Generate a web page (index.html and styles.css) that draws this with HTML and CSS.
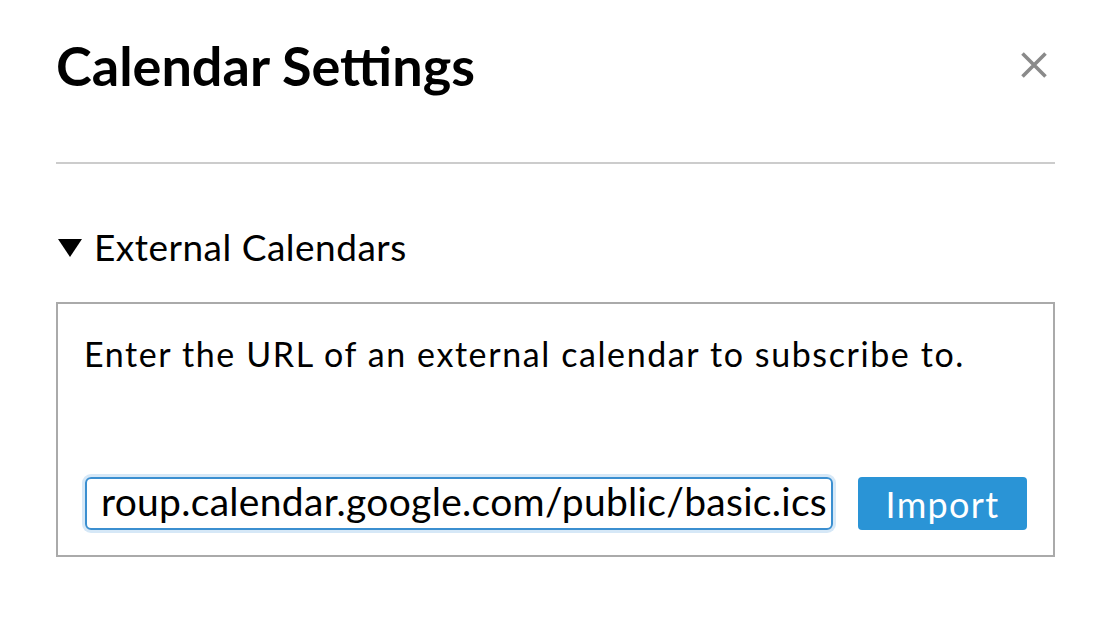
FILE: index.html
```html
<!DOCTYPE html>
<html lang="en">
<head>
    <meta charset="UTF-8">
    <meta name="viewport" content="width=device-width, initial-scale=1.0">
    <title>Calendar Settings</title>
    <link rel="stylesheet" href="styles.css">
</head>
<body>
    <div class="modal">
        <!-- Header -->
        <div class="modal-header">
            <h1>Calendar Settings</h1>
            <button class="close-btn" aria-label="Close">
                <svg width="28" height="28" viewBox="0 0 28 28">
                    <path d="M2.5 2.5 L25.5 25.5 M25.5 2.5 L2.5 25.5" stroke="#8a8a8a" stroke-width="3.6"/>
                </svg>
            </button>
        </div>

        <!-- External calendars section -->
        <div class="section">
            <div class="section-title">
                <span class="caret"></span>
                External Calendars
            </div>
            <div class="section-body">
                <p>Enter the URL of an external calendar to subscribe to.</p>
                <div class="import-row">
                    <div class="url-input">roup.calendar.google.com/public/basic.ics</div>
                    <button class="import-btn">Import</button>
                </div>
            </div>
        </div>
    </div>
</body>
</html>
```

FILE: styles.css
```css
body {
    margin: 0;
    background: #fff;
    font-family: 'Lato', 'Open Sans', sans-serif;
    color: #000;
}
.modal {
    padding: 0 55px 0 56px;
}
.modal-header {
    display: flex;
    justify-content: space-between;
    align-items: flex-start;
    padding-top: 36px;
    padding-bottom: 66px;
    border-bottom: 2px solid #cccccc;
}
.modal-header h1 {
    margin: 0;
    font-size: 54px;
    font-weight: 700;
    line-height: 60px;
}
.close-btn {
    background: none;
    border: none;
    padding: 0;
    margin: 15px 7px 0 0;
    cursor: pointer;
}
.close-btn svg {
    display: block;
}
.section {
    padding-top: 63px;
}
.section-title {
    display: flex;
    align-items: center;
    font-size: 37px;
    letter-spacing: 0.5px;
    line-height: 40px;
    margin-bottom: 35px;
}
.caret {
    width: 0;
    height: 0;
    border-left: 12.5px solid transparent;
    border-right: 12.5px solid transparent;
    border-top: 18px solid #000;
    margin: 2px 12px 0 2px;
}
.section-body {
    border: 2px solid #aaaaaa;
    padding: 30px 26px 25px 26px;
}
.section-body p {
    margin: 0 0 103px 0;
    font-size: 34px;
    letter-spacing: 1.6px;
    line-height: 40px;
}
.import-row {
    display: flex;
    align-items: center;
    gap: 25px;
}
.url-input {
    display: flex;
    justify-content: flex-end;
    align-items: center;
    white-space: nowrap;
    width: 748px;
    height: 53px;
    box-sizing: border-box;
    margin-left: 1px;
    border: 2px solid #3b8fd0;
    border-radius: 6px;
    box-shadow: 0 0 0 3px #d6e8f7;
    padding: 0 4px 5px 10px;
    font-size: 39px;
    letter-spacing: 0.3px;
}
.import-btn {
    width: 169px;
    height: 53px;
    background-color: #2a94d6;
    color: #fff;
    border: none;
    border-radius: 4px;
    font-family: inherit;
    font-size: 36px;
    letter-spacing: 1.3px;
    cursor: pointer;
}
```
